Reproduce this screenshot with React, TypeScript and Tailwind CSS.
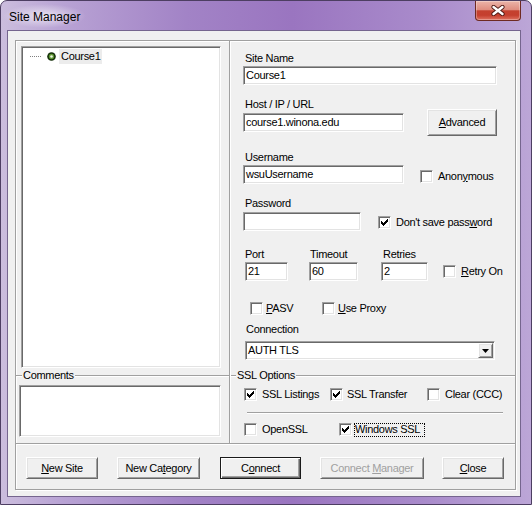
import React from "react";

const sunken =
  "bg-white border border-t-[#a0a0a0] border-l-[#a0a0a0] border-r-white border-b-white shadow-[inset_1px_1px_0_#696969,inset_-1px_-1px_0_#e3e3e3]";

const etchedLine = "h-[2px] border-t border-[#a0a0a0] bg-white";

// classic 7x7 check glyph, pixel by pixel
const checkPixels: [number, number][] = [
  [6, 0],
  [5, 1], [6, 1],
  [0, 2], [4, 2], [5, 2], [6, 2],
  [0, 3], [1, 3], [3, 3], [4, 3], [5, 3],
  [0, 4], [1, 4], [2, 4], [3, 4], [4, 4],
  [1, 5], [2, 5], [3, 5],
  [2, 6],
];

function Label({ children, className = "" }: { children: React.ReactNode; className?: string }) {
  return <div className={`h-[13px] whitespace-nowrap ${className}`}>{children}</div>;
}

function Field({ value, className = "" }: { value?: string; className?: string }) {
  return (
    <div className={`h-[19px] shrink-0 flex items-center pl-[1px] ${sunken} ${className}`}>
      <span className="pl-px whitespace-nowrap">{value}</span>
    </div>
  );
}

function Box({ checked = false }: { checked?: boolean }) {
  return (
    <span className={`w-[13px] h-[13px] shrink-0 flex items-center justify-center ${sunken}`}>
      {checked ? (
        <svg width="7" height="7" viewBox="0 0 7 7" shapeRendering="crispEdges">
          {checkPixels.map(([x, y]) => (
            <rect key={`${x}-${y}`} x={x} y={y} width="1" height="1" fill="#000" />
          ))}
        </svg>
      ) : null}
    </span>
  );
}

function Check({
  children,
  checked,
  className = "",
  gap = "ml-[5px]",
}: {
  children: React.ReactNode;
  checked?: boolean;
  className?: string;
  gap?: string;
}) {
  return (
    <div className={`h-[13px] flex items-center shrink-0 ${className}`}>
      <Box checked={checked} />
      <span className={`whitespace-nowrap ${gap}`}>{children}</span>
    </div>
  );
}

function Btn({
  children,
  className = "",
  primary,
  disabled,
}: {
  children: React.ReactNode;
  className?: string;
  primary?: boolean;
  disabled?: boolean;
}) {
  return (
    <div
      className={[
        "shrink-0 flex items-center justify-center bg-[#f0f0f0] whitespace-nowrap",
        primary
          ? "border border-[#1a1a1a] shadow-[inset_1px_1px_0_#fff,inset_-1px_-1px_0_#696969,inset_-2px_-2px_0_#a0a0a0]"
          : "border border-t-white border-l-white border-r-[#696969] border-b-[#696969] shadow-[inset_1px_1px_0_#e3e3e3,inset_-1px_-1px_0_#a0a0a0]",
        disabled ? "text-[#a0a0a0]" : "text-black",
        className,
      ].join(" ")}
    >
      <span className="whitespace-pre">{children}</span>
    </div>
  );
}

function CloseButton() {
  return (
    <div className="mr-[10px] w-[46px] h-[20px] flex items-center justify-center rounded-b-[4px] border border-t-0 border-[#6e2a22] bg-[linear-gradient(180deg,#ebb4a9_0%,#df8e80_45%,#c4412f_52%,#c53f2e_75%,#de7260_100%)] shadow-[inset_0_0_0_1px_rgba(255,255,255,0.3)]">
      <svg width="14" height="11" viewBox="0 0 14 11">
        <path d="M2.5 2 L11.5 9 M11.5 2 L2.5 9" stroke="#4f1a14" strokeWidth="4.2" strokeLinecap="round" />
        <path d="M2.5 2 L11.5 9 M11.5 2 L2.5 9" stroke="#fff" strokeWidth="2.4" strokeLinecap="round" />
      </svg>
    </div>
  );
}

function TreeIcon() {
  return (
    <svg width="9" height="9" viewBox="0 0 9 9" className="ml-[6px] shrink-0">
      <circle cx="4.5" cy="4.5" r="4.3" fill="#14300a" />
      <circle cx="4.5" cy="4.5" r="2.7" fill="#5c9430" />
      <circle cx="4.5" cy="4.5" r="1.3" fill="#eef6e4" />
    </svg>
  );
}

export default function App() {
  return (
    <div className="w-[532px] h-[505px] overflow-hidden bg-white font-['Liberation_Sans',Arial,sans-serif] text-[11px] leading-[13px] tracking-[-0.3px] text-black">
      <div className="w-[532px] h-[505px] flex flex-col rounded-t-[7px] border border-[#4d3e62] bg-[linear-gradient(90deg,#cbbddd_0%,#b8a2d4_12%,#a283c6_35%,#9a75c0_55%,#a98bcb_80%,#bca6d7_100%)]">
        {/* title bar */}
        <div className="h-[29px] shrink-0 flex items-start justify-between">
          <div className="ml-[2px] mt-[3px] h-[24px] px-[6px] pt-[6px] text-[12px] leading-[15px] tracking-normal bg-[radial-gradient(closest-side,rgba(255,255,255,0.65),rgba(255,255,255,0))]">
            Site Manager
          </div>
          <CloseButton />
        </div>

        {/* client area */}
        <div className="ml-[6px] w-[514px] h-[467px] shrink-0 border border-[#75658e] bg-[#f0f0f0]">
          <div className="ml-[7px] mt-[9px] w-[501px] h-[450px] flex flex-col border border-[#a0a0a0] shadow-[inset_1px_1px_0_#fff,1px_1px_0_#fff]">
            <div className="h-[402px] flex">
              {/* left: tree + comments */}
              <div className="w-[213px] flex flex-col">
                <div className={`ml-[5px] mt-[5px] w-[200px] h-[322px] ${sunken}`}>
                  <div className="mt-[1px] h-[16px] flex items-center">
                    <span className="ml-[8px] w-[11px] h-0 border-t border-dotted border-[#808080]" />
                    <TreeIcon />
                    <span className="ml-[3px] h-[15px] px-[2px] flex items-center bg-[#ececec]">Course1</span>
                  </div>
                </div>
                <div className="mt-[1px] h-[13px] flex items-center">
                  <div className={`w-[6px] ${etchedLine}`} />
                  <span className="px-px">Comments</span>
                  <div className={`flex-1 ${etchedLine}`} />
                </div>
                <div className={`ml-[3px] mt-[3px] w-[202px] h-[52px] ${sunken}`} />
              </div>

              <div className="w-[2px] border-l border-[#a0a0a0] bg-white" />

              {/* right: site settings */}
              <div className="flex-1 flex flex-col">
                <Label className="ml-[14px] mt-[11px]">Site Name</Label>
                <Field className="ml-[12px] mt-[1px] w-[254px]" value="Course1" />

                <Label className="ml-[14px] mt-[13px]">Host / IP / URL</Label>
                <div className="flex items-start">
                  <Field className="ml-[12px] mt-[2px] w-[161px]" value="course1.winona.edu" />
                  <Btn className="ml-[23px] -mt-[2px] w-[70px] h-[27px]">
                    <u>A</u>dvanced
                  </Btn>
                </div>

                <Label className="ml-[14px] mt-[15px]">Username</Label>
                <div className="flex items-start">
                  <Field className="ml-[12px] mt-[1px] w-[161px]" value="wsuUsername" />
                  <Check className="ml-[16px] mt-[6px]">
                    Anon<u>y</u>mous
                  </Check>
                </div>

                <Label className="ml-[14px] mt-[13px]">Password</Label>
                <div className="flex items-start">
                  <Field className="ml-[12px] mt-[2px] w-[118px]" />
                  <Check checked className="ml-[17px] mt-[6px]">
                    Don't save pass<u>w</u>ord
                  </Check>
                </div>

                <div className="mt-[17px] flex items-start">
                  <div className="ml-[14px] w-[43px] flex flex-col">
                    <Label>Port</Label>
                    <Field className="mt-[1px] w-full" value="21" />
                  </div>
                  <div className="ml-[21px] w-[49px] flex flex-col">
                    <Label className="pl-[1px]">Timeout</Label>
                    <Field className="mt-[1px] w-full" value="60" />
                  </div>
                  <div className="ml-[23px] w-[47px] flex flex-col">
                    <Label className="pl-[2px]">Retries</Label>
                    <Field className="mt-[1px] w-full" value="2" />
                  </div>
                  <Check className="ml-[15px] mt-[17px]">
                    <u>R</u>etry On
                  </Check>
                </div>

                <div className="mt-[21px] flex items-start">
                  <Check className="ml-[19px] w-[72px]" gap="ml-[3px]">
                    <u>P</u>ASV
                  </Check>
                  <Check gap="ml-[3px]">
                    <u>U</u>se Proxy
                  </Check>
                </div>

                <Label className="ml-[15px] mt-[8px]">Connection</Label>
                <div className={`ml-[14px] mt-[5px] w-[250px] h-[19px] flex items-center pl-[2px] ${sunken}`}>
                  <span>AUTH TLS</span>
                  <div className="ml-auto mr-[1px] w-[15px] h-[15px] flex items-center justify-center bg-[#f0f0f0] border border-t-white border-l-white border-r-[#696969] border-b-[#696969] shadow-[inset_1px_1px_0_#e3e3e3,inset_-1px_-1px_0_#a0a0a0]">
                    <svg width="7" height="4" viewBox="0 0 7 4">
                      <path d="M0 0h7L3.5 4z" fill="#000" />
                    </svg>
                  </div>
                </div>

                {/* SSL Options group */}
                <div className="mt-[9px] h-[13px] flex items-center">
                  <div className={`w-[5px] ${etchedLine}`} />
                  <span className="px-px">SSL Options</span>
                  <div className={`flex-1 ${etchedLine}`} />
                </div>
                <div className="mt-[6px] flex items-start">
                  <div className="ml-[13px] w-[86px] h-[13px] flex items-center">
                    <Box checked />
                    <span className="ml-[5px] w-[60px] overflow-hidden whitespace-nowrap">SSL Listings</span>
                  </div>
                  <Check checked className="w-[97px]" gap="ml-[4px]">
                    SSL Transfer
                  </Check>
                  <Check>Clear (CCC)</Check>
                </div>
                <div className={`ml-[16px] mt-[11px] w-[256px] ${etchedLine}`} />
                <div className="mt-[9px] flex items-start">
                  <Check className="ml-[13px] w-[95px]">OpenSSL</Check>
                  <div className="h-[13px] flex items-center">
                    <Box checked />
                    <span className="ml-[2px] w-[71px] h-[14px] flex items-center border border-dotted border-black whitespace-nowrap">
                      Windows SSL
                    </span>
                  </div>
                </div>
              </div>
            </div>

            <div className={etchedLine} />

            {/* bottom buttons */}
            <div className="flex-1 flex items-start pt-[12px]">
              <Btn className="ml-[10px] w-[72px] h-[22px]">
                <u>N</u>ew Site
              </Btn>
              <Btn className="ml-[19px] w-[83px] h-[22px]">
                New Ca<u>t</u>egory
              </Btn>
              <Btn primary className="ml-[20px] w-[81px] h-[22px]">
                C<u>o</u>nnect
              </Btn>
              <Btn disabled className="ml-[19px] w-[104px] h-[22px]">
                Connect <u>M</u>anager
              </Btn>
              <Btn className="ml-[18px] w-[62px] h-[22px]">
                <u>C</u>lose
              </Btn>
            </div>
          </div>
        </div>
      </div>
    </div>
  );
}
